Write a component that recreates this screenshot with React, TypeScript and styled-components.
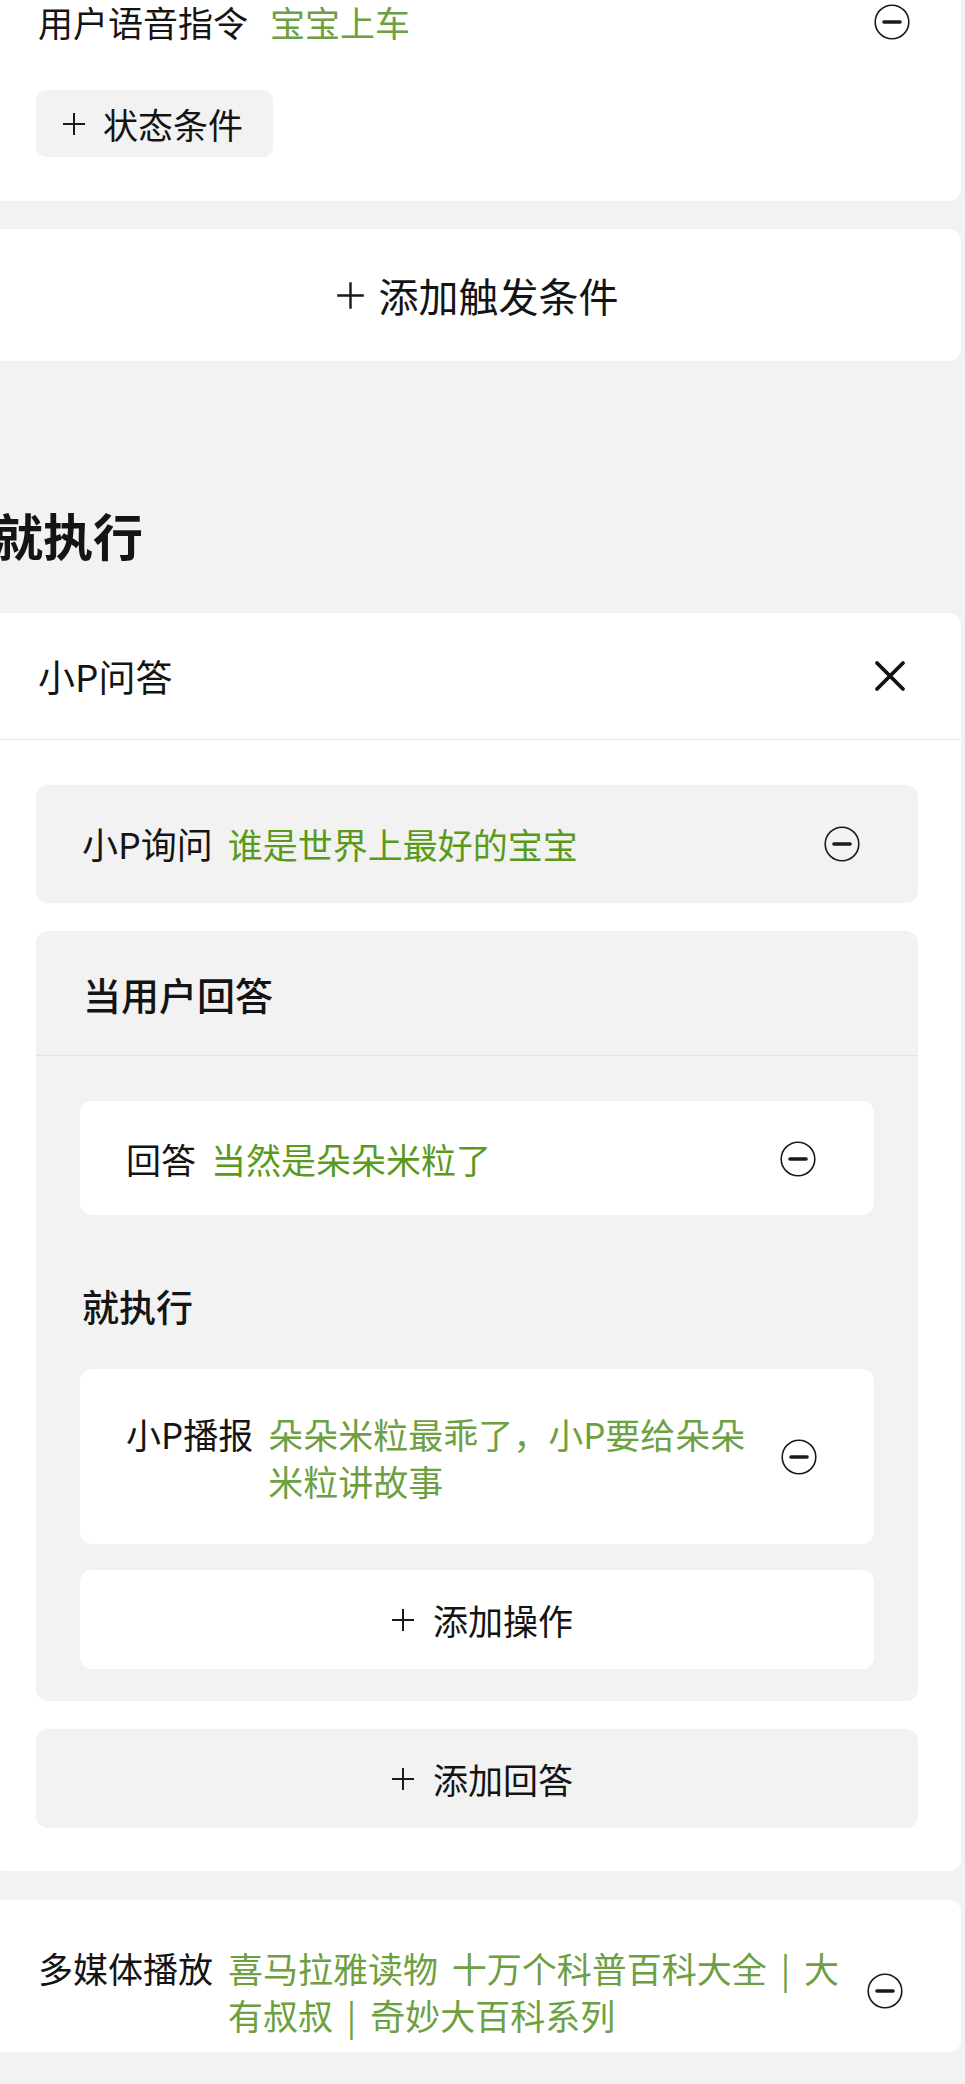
import styled, { createGlobalStyle } from "styled-components";

const GlobalStyle = createGlobalStyle`
  body {
    margin: 0;
    background: #f2f2f2;
    font-family: "Noto Sans CJK SC", "Noto Sans", sans-serif;
    color: #141414;
    overflow-x: hidden;
  }
`;

const Column = styled.div`
  width: 968px;
  margin-left: -7px;
  display: flex;
  flex-direction: column;
`;

const Card = styled.section`
  background: #ffffff;
  border-radius: 12px;
`;

const TopCard = styled(Card)`
  margin-top: -38px;
  padding: 36px 51px 44px 45px;
`;

const Row = styled.div<{ $align?: string; $gap?: number }>`
  display: flex;
  align-items: ${(p) => p.$align ?? "center"};
  gap: ${(p) => p.$gap ?? 15}px;
`;

const Label = styled.span<{ $size?: number }>`
  font-size: ${(p) => p.$size ?? 35}px;
  line-height: 47px;
  white-space: nowrap;
  flex-shrink: 0;
`;

const Value = styled.span<{ $tone?: "bright" | "soft"; $spacing?: number }>`
  flex: 1;
  font-size: 35px;
  line-height: 47px;
  word-spacing: ${(p) => p.$spacing ?? 0}px;
  color: ${(p) => (p.$tone === "bright" ? "#5a9a1a" : "#6ca040")};
`;

const IconSlot = styled.span<{ $center?: boolean }>`
  display: flex;
  flex-shrink: 0;
  align-self: ${(p) => (p.$center ? "center" : "auto")};
`;

const Chip = styled.div`
  display: inline-flex;
  align-items: center;
  gap: 17px;
  height: 67px;
  margin: 45px 0 0 -2px;
  padding: 0 30px 0 26px;
  background: #f2f2f2;
  border-radius: 10px;
  font-size: 35px;
  align-self: flex-start;
`;

const AddCard = styled(Card)`
  margin-top: 28px;
  height: 132px;
  display: flex;
  align-items: center;
  justify-content: center;
  gap: 14px;
  font-size: 40px;
`;

const SectionTitle = styled.h2`
  margin: 138px 0 44px;
  font-size: 50px;
  line-height: 70px;
  font-weight: 700;
`;

const CardHeader = styled.div`
  height: 126px;
  padding: 0 55px 0 45px;
  display: flex;
  align-items: center;
  justify-content: space-between;
  border-bottom: 1px solid #e6e6e6;
  font-size: 37px;
`;

const CardBody = styled.div`
  padding: 45px 43px 43px;
  display: flex;
  flex-direction: column;
  gap: 28px;
`;

const GrayItem = styled.div`
  background: #f2f2f2;
  border-radius: 12px;
  padding: 35px 58px 36px 46px;
`;

const Group = styled.div`
  background: #f2f2f2;
  border-radius: 12px;
`;

const GroupHeader = styled.div`
  height: 124px;
  padding-left: 47px;
  display: flex;
  align-items: center;
  border-bottom: 1px solid #e2e2e2;
  font-size: 38px;
  font-weight: 500;
`;

const GroupBody = styled.div`
  padding: 45px 44px 32px;
  display: flex;
  flex-direction: column;
`;

const WhiteItem = styled.div<{ $pad: string }>`
  background: #ffffff;
  border-radius: 12px;
  padding: ${(p) => p.$pad};
`;

const SubLabel = styled.div`
  margin: 68px 0 39px 2px;
  font-size: 37px;
  line-height: 47px;
  font-weight: 500;
`;

const AddButton = styled.div<{ $gray?: boolean }>`
  height: 99px;
  border-radius: 12px;
  background: ${(p) => (p.$gray ? "#f2f2f2" : "#ffffff")};
  display: flex;
  align-items: center;
  justify-content: center;
  gap: 18px;
  padding-left: 10px;
  font-size: 35px;
  margin-top: ${(p) => (p.$gray ? 0 : 26)}px;
`;

const MediaCard = styled(Card)`
  margin-top: 29px;
  padding: 44px 58px 14px 45px;
`;

function MinusCircle() {
  return (
    <svg width="36" height="36" viewBox="0 0 36 36">
      <circle cx="18" cy="18" r="16.8" fill="none" stroke="#1a1a1a" strokeWidth="1.6" />
      <line x1="10" y1="18" x2="26" y2="18" stroke="#1a1a1a" strokeWidth="3.6" strokeLinecap="round" />
    </svg>
  );
}

function CloseIcon() {
  return (
    <svg width="32" height="32" viewBox="0 0 32 32">
      <path d="M3 3 L29 29 M29 3 L3 29" stroke="#111" strokeWidth="3.8" strokeLinecap="round" />
    </svg>
  );
}

function Plus({ size }: { size: number }) {
  return (
    <svg width={size} height={size} viewBox="0 0 24 24">
      <path d="M12 1 V23 M1 12 H23" stroke="#1a1a1a" strokeWidth="2" />
    </svg>
  );
}

export default function App() {
  return (
    <>
      <GlobalStyle />
      <Column>
        <TopCard>
          <Row $gap={22}>
            <Label>用户语音指令</Label>
            <Value $tone="soft">宝宝上车</Value>
            <IconSlot>
              <MinusCircle />
            </IconSlot>
          </Row>
          <Chip>
            <Plus size={24} />
            状态条件
          </Chip>
        </TopCard>

        <AddCard>
          <Plus size={29} />
          添加触发条件
        </AddCard>

        <SectionTitle>就执行</SectionTitle>

        <Card>
          <CardHeader>
            小P问答
            <CloseIcon />
          </CardHeader>
          <CardBody>
            <GrayItem>
              <Row>
                <Label $size={36}>小P询问</Label>
                <Value $tone="bright">谁是世界上最好的宝宝</Value>
                <IconSlot>
                  <MinusCircle />
                </IconSlot>
              </Row>
            </GrayItem>

            <Group>
              <GroupHeader>当用户回答</GroupHeader>
              <GroupBody>
                <WhiteItem $pad="34px 58px 33px 46px">
                  <Row>
                    <Label>回答</Label>
                    <Value $tone="bright">当然是朵朵米粒了</Value>
                    <IconSlot>
                      <MinusCircle />
                    </IconSlot>
                  </Row>
                </WhiteItem>
                <SubLabel>就执行</SubLabel>
                <WhiteItem $pad="41px 57px 40px 46px">
                  <Row $align="flex-start">
                    <Label>小P播报</Label>
                    <Value $tone="soft">朵朵米粒最乖了，小P要给朵朵米粒讲故事</Value>
                    <IconSlot $center>
                      <MinusCircle />
                    </IconSlot>
                  </Row>
                </WhiteItem>
                <AddButton>
                  <Plus size={24} />
                  添加操作
                </AddButton>
              </GroupBody>
            </Group>

            <AddButton $gray>
              <Plus size={24} />
              添加回答
            </AddButton>
          </CardBody>
        </Card>

        <MediaCard>
          <Row $align="flex-start">
            <Label>多媒体播放</Label>
            <Value $tone="soft" $spacing={6}>
              喜马拉雅读物 十万个科普百科大全 | 大有叔叔 | 奇妙大百科系列
            </Value>
            <IconSlot $center>
              <MinusCircle />
            </IconSlot>
          </Row>
        </MediaCard>
      </Column>
    </>
  );
}
